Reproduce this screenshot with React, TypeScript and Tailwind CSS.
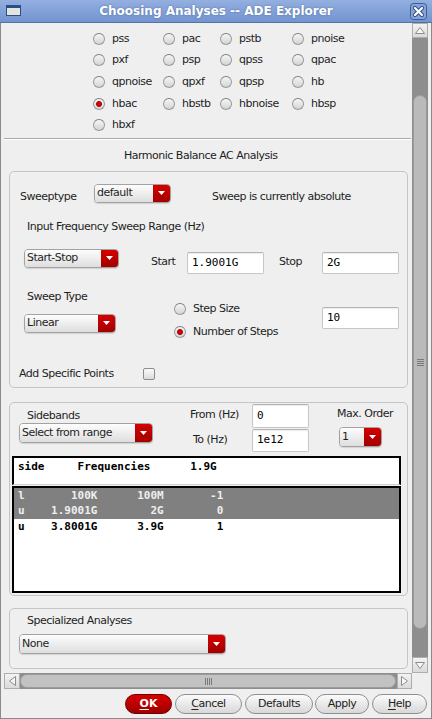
import React from "react";

const mono = "font-['DejaVu_Sans_Mono',monospace] tracking-normal";

function Combo({ text, className }: { text: string; className: string }) {
  return (
    <div
      className={`flex shrink-0 overflow-hidden rounded-[4px] border border-[#a2a2a2] shadow-[0_1px_1px_rgba(0,0,0,0.12)] ${className}`}
    >
      <div className="flex flex-1 items-center bg-linear-to-b from-[#fdfdfd] to-[#dedede] pb-[1px] pl-[2px] leading-none">
        {text}
      </div>
      <div className="flex w-[17px] items-center justify-center bg-linear-to-b from-[#d60000] to-[#a10000]">
        <svg width="7" height="4" viewBox="0 0 7 4">
          <path d="M0 0h7L3.5 4z" fill="#fff" />
        </svg>
      </div>
    </div>
  );
}

function Field({ value, className }: { value: string; className: string }) {
  return (
    <div
      className={`flex shrink-0 items-center rounded-[2px] border border-[#c6c6c6] border-t-[#b4b4b4] bg-white pl-[4px] text-[11px] text-black shadow-[inset_0_1px_1px_rgba(0,0,0,0.08)] ${mono} ${className}`}
    >
      {value}
    </div>
  );
}

function Radio({ on = false }: { on?: boolean }) {
  return (
    <span className="flex h-[12px] w-[12px] shrink-0 items-center justify-center rounded-full border border-[#9a9a9a] border-t-[#7c7c7c] bg-linear-to-b from-[#f6f6f6] to-[#d4d4d4]">
      {on && <span className="h-[6px] w-[6px] rounded-full border border-[#8a0000] bg-[#e80000]" />}
    </span>
  );
}

function Opt({ label, on }: { label: string; on?: boolean }) {
  return (
    <div className="flex items-center">
      <Radio on={on} />
      <span className="ml-[7px] leading-[14px]">{label}</span>
    </div>
  );
}

function Arrow({ dir }: { dir: "up" | "down" | "left" | "right" }) {
  const pts = {
    up: "5,0.5 9.5,6.5 0.5,6.5",
    down: "0.5,0.5 9.5,0.5 5,6.5",
    left: "0.5,5 6.5,0.5 6.5,9.5",
    right: "0.5,0.5 6.5,5 0.5,9.5",
  }[dir];
  const v = dir === "up" || dir === "down";
  return (
    <svg width={v ? 10 : 7} height={v ? 7 : 10} viewBox={v ? "0 0 10 7" : "0 0 7 10"}>
      <polygon points={pts} fill="#f7f7f7" stroke="#8c8c8c" strokeWidth="1" />
    </svg>
  );
}

function Btn({ label, u, className }: { label: string; u?: boolean; className: string }) {
  return (
    <div
      className={`flex h-[20px] shrink-0 items-center justify-center rounded-full border border-[#8f8f8f] bg-linear-to-b from-[#fbfbfb] to-[#d8d8d8] text-[#222] ${className}`}
    >
      {u ? (
        <span>
          <span className="underline underline-offset-2">{label[0]}</span>
          {label.slice(1)}
        </span>
      ) : (
        label
      )}
    </div>
  );
}

const grid = [
  ["pss", "pac", "pstb", "pnoise"],
  ["pxf", "psp", "qpss", "qpac"],
  ["qpnoise", "qpxf", "qpsp", "hb"],
  ["hbac", "hbstb", "hbnoise", "hbsp"],
  ["hbxf"],
];
const colW = ["w-[70px]", "w-[57px]", "w-[72px]", "w-[60px]"];

const rows = [
  { t: "l       100K      100M       -1", sel: true },
  { t: "u    1.9001G        2G        0", sel: true },
  { t: "u    3.8001G      3.9G        1", sel: false },
];

export default function App() {
  return (
    <div className="flex h-[719px] w-[432px] flex-col overflow-hidden bg-[#efefef] font-['DejaVu_Sans',sans-serif] text-[11px] tracking-[-0.5px] text-[#1e1e1e]">
      {/* title bar */}
      <div className="relative flex h-[23px] shrink-0 items-center justify-center border-b border-[#56739f] bg-linear-to-b from-[#94afe0] to-[#7294d0]">
        <div className="absolute left-[6px] top-[5px] h-[11px] w-[15px] border border-t-[3px] border-[#2a4d8c] bg-[#e4e4dc]" />
        <span className="text-[12px] font-bold tracking-normal text-white [text-shadow:0_0_2px_rgba(40,70,120,0.6)]">
          Choosing Analyses -- ADE Explorer
        </span>
        <svg className="absolute left-[410px] top-[3px]" width="17" height="17" viewBox="0 0 17 17">
          <rect x="0.5" y="0.5" width="16" height="16" rx="3" fill="#86a4d8" stroke="#3b5d95" />
          <path d="M5 5l7 7M12 5l-7 7" stroke="#2e5089" strokeWidth="4.2" strokeLinecap="round" />
          <path d="M5 5l7 7M12 5l-7 7" stroke="#fff" strokeWidth="2.2" strokeLinecap="round" />
        </svg>
      </div>

      <div className="flex flex-1 flex-col border-x border-b border-[#8a8a8a] px-[3px]">
        <div className="flex h-[650px] shrink-0">
          {/* scrolled content */}
          <div className="flex w-[408px] flex-col overflow-hidden">
            <div className="flex shrink-0 flex-col pl-[89px] pt-[5px]">
              {grid.map((r, i) => (
                <div key={i} className="flex h-[21.6px] items-center">
                  {r.map((l, j) => (
                    <div key={l} className={colW[j]}>
                      <Opt label={l} on={l === "hbac"} />
                    </div>
                  ))}
                </div>
              ))}
            </div>
            <div className="mt-[2px] h-[2px] w-[407px] shrink-0 border-t border-b border-t-[#ababab] border-b-white" />
            <div className="mt-[9px] shrink-0 pl-[120px] leading-[14px]">Harmonic Balance AC Analysis</div>

            {/* box 1 */}
            <div className="ml-[5px] mt-[8px] flex h-[217px] w-[399px] shrink-0 flex-col rounded-[5px] border border-[#c4c4c4]">
              <div className="flex">
                <span className="ml-[10px] mt-[18px] w-[74px] leading-[14px]">Sweeptype</span>
                <Combo text="default" className="mt-[12px] h-[19px] w-[77px]" />
                <span className="ml-[41px] mt-[18px] leading-[14px]">Sweep is currently absolute</span>
              </div>
              <div className="ml-[17px] mt-[16px] leading-[14px]">Input Frequency Sweep Range (Hz)</div>
              <div className="flex">
                <Combo text="Start-Stop" className="ml-[14px] mt-[15px] h-[19px] w-[95px]" />
                <span className="ml-[32px] mt-[21px] w-[36px] leading-[14px]">Start</span>
                <Field value="1.9001G" className="mt-[18px] h-[22px] w-[77px]" />
                <span className="ml-[15px] mt-[21px] w-[43px] leading-[14px]">Stop</span>
                <Field value="2G" className="mt-[18px] h-[22px] w-[77px]" />
              </div>
              <div className="flex">
                <div className="flex w-[150px] flex-col">
                  <span className="ml-[17px] mt-[16px] leading-[14px]">Sweep Type</span>
                  <Combo text="Linear" className="ml-[14px] mt-[10px] h-[19px] w-[92px]" />
                </div>
                <div className="flex w-[162px] flex-col pl-[14px]">
                  <div className="mt-[28px] h-[14px]">
                    <Opt label="Step Size" />
                  </div>
                  <div className="mt-[9px] h-[14px]">
                    <Opt label="Number of Steps" on />
                  </div>
                </div>
                <Field value="10" className="mt-[33px] h-[22px] w-[77px]" />
              </div>
              <div className="mt-[28px] flex">
                <span className="ml-[9px] w-[124px] leading-[14px]">Add Specific Points</span>
                <span className="mt-[1px] h-[12px] w-[12px] rounded-[2px] border border-[#8c8c8c] bg-linear-to-b from-[#fafafa] to-[#dcdcdc]" />
              </div>
            </div>

            {/* box 2 */}
            <div className="ml-[5px] mt-[14px] flex h-[194px] w-[399px] shrink-0 flex-col rounded-[5px] border border-[#c4c4c4]">
              <div className="flex">
                <div className="flex w-[170px] flex-col">
                  <span className="ml-[17px] mt-[6px] leading-[14px]">Sidebands</span>
                  <Combo text="Select from range" className="ml-[9px] h-[20px] w-[134px]" />
                </div>
                <div className="flex w-[72px] flex-col">
                  <span className="ml-[10px] mt-[5px] leading-[14px]">From (Hz)</span>
                  <span className="ml-[13px] mt-[11px] leading-[14px]">To (Hz)</span>
                </div>
                <div className="flex w-[57px] flex-col">
                  <Field value="0" className="mt-[1px] h-[24px] w-[57px]" />
                  <Field value="1e12" className="mt-[1px] h-[23px] w-[57px]" />
                </div>
                <div className="flex flex-col">
                  <span className="ml-[28px] mt-[4px] leading-[14px]">Max. Order</span>
                  <Combo text="1" className="ml-[30px] mt-[6px] h-[20px] w-[43px]" />
                </div>
              </div>
              <div
                className={`ml-[2px] mt-[4px] h-[29px] w-[389px] whitespace-pre border-x-2 border-t-2 border-b border-black border-b-[#d0d0d0] border-r-black bg-white pl-[4px] pt-[2px] font-bold leading-[14px] text-black ${mono}`}
              >
                {"side     Frequencies      1.9G"}
              </div>
              <div className={`ml-[2px] mt-[1px] h-[107px] w-[389px] border-2 border-black bg-white font-bold ${mono}`}>
                {rows.map((r) => (
                  <div
                    key={r.t}
                    className={`h-[15.5px] whitespace-pre pl-[4px] leading-[15.5px] ${r.sel ? "bg-[#808080] text-[#eeeeee]" : "text-black"}`}
                  >
                    {r.t}
                  </div>
                ))}
              </div>
            </div>

            {/* box 3 */}
            <div className="ml-[5px] mt-[12px] flex h-[61px] w-[399px] shrink-0 flex-col rounded-[5px] border border-[#c4c4c4]">
              <span className="ml-[17px] mt-[5px] leading-[14px]">Specialized Analyses</span>
              <Combo text="None" className="ml-[9px] mt-[6px] h-[20px] w-[207px]" />
            </div>
          </div>

          {/* vertical scrollbar */}
          <div className="flex w-[16px] flex-col bg-[#8e8e8e]">
            <div className="flex h-[15px] items-center justify-center border border-[#adadad] bg-linear-to-b from-[#f3f3f3] to-[#dadada]">
              <Arrow dir="up" />
            </div>
            <div className="mx-[1px] mt-[57px] flex h-[534px] flex-col items-center justify-center gap-[1px] rounded-[7px] border border-[#9c9c9c] bg-[#bababa]">
              <span className="h-px w-[7px] bg-[#7a7a7a]" />
              <span className="h-px w-[7px] bg-[#7a7a7a]" />
              <span className="h-px w-[7px] bg-[#7a7a7a]" />
              <span className="h-px w-[7px] bg-[#7a7a7a]" />
            </div>
            <div className="flex-1" />
            <div className="flex h-[16px] items-center justify-center border border-[#adadad] bg-linear-to-b from-[#f3f3f3] to-[#dadada]">
              <Arrow dir="down" />
            </div>
          </div>
        </div>

        {/* horizontal scrollbar */}
        <div className="flex h-[16px] w-[408px] shrink-0 bg-[#8e8e8e]">
          <div className="flex w-[16px] items-center justify-center border border-[#adadad] bg-linear-to-b from-[#f3f3f3] to-[#dadada]">
            <Arrow dir="left" />
          </div>
          <div className="my-[1px] flex w-[376px] items-center justify-center gap-[1px] rounded-full border border-[#9c9c9c] bg-[#c2c2c2]">
            <span className="h-[7px] w-px bg-[#7a7a7a]" />
            <span className="h-[7px] w-px bg-[#7a7a7a]" />
            <span className="h-[7px] w-px bg-[#7a7a7a]" />
            <span className="h-[7px] w-px bg-[#7a7a7a]" />
          </div>
          <div className="flex-1" />
          <div className="flex w-[15px] items-center justify-center border border-[#adadad] bg-linear-to-b from-[#f3f3f3] to-[#dadada]">
            <Arrow dir="right" />
          </div>
        </div>

        {/* buttons */}
        <div className="flex flex-1 items-start pl-[121px] pt-[5px]">
          <div className="flex h-[20px] w-[47px] items-center justify-center rounded-full border border-[#6e0000] bg-linear-to-b from-[#d80000] to-[#a00000] font-bold tracking-normal text-white">
            <span className="underline underline-offset-2">O</span>K
          </div>
          <Btn label="Cancel" u className="ml-[3px] w-[67px]" />
          <Btn label="Defaults" className="ml-[3px] w-[68px]" />
          <Btn label="Apply" className="ml-[2px] w-[54px]" />
          <Btn label="Help" u className="ml-[3px] w-[55px]" />
        </div>
      </div>
    </div>
  );
}
